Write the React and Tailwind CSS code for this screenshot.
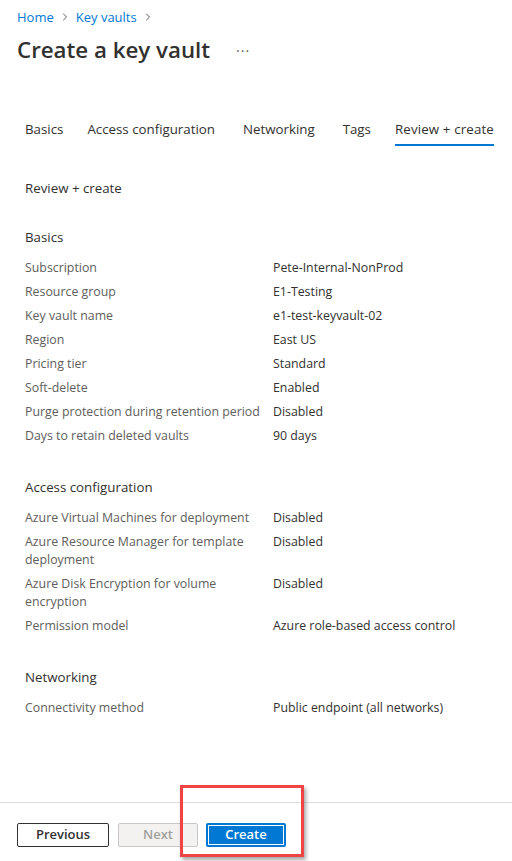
import React from 'react';
import { ChevronRight } from 'lucide-react';

const basics = [
  ['Subscription', 'Pete-Internal-NonProd'],
  ['Resource group', 'E1-Testing'],
  ['Key vault name', 'e1-test-keyvault-02'],
  ['Region', 'East US'],
  ['Pricing tier', 'Standard'],
  ['Soft-delete', 'Enabled'],
  ['Purge protection during retention period', 'Disabled'],
  ['Days to retain deleted vaults', '90 days'],
];

const access = [
  ['Azure Virtual Machines for deployment', 'Disabled'],
  ['Azure Resource Manager for template deployment', 'Disabled'],
  ['Azure Disk Encryption for volume encryption', 'Disabled'],
  ['Permission model', 'Azure role-based access control'],
];

const networking = [['Connectivity method', 'Public endpoint (all networks)']];

const tabs = [
  { label: 'Basics', cls: '' },
  { label: 'Access configuration', cls: 'ml-[24px]' },
  { label: 'Networking', cls: 'ml-[28px]' },
  { label: 'Tags', cls: 'ml-[28px]' },
  { label: 'Review + create', cls: 'ml-[24px] tracking-[0.15px]' },
];

function Section({ title, rows }) {
  return (
    <div>
      <div className="text-[13.3px] leading-[18px] text-[#323130] mb-[10px]">{title}</div>
      {rows.map(([label, value]) => (
        <div key={label} className="grid grid-cols-[248px_1fr] py-[3px] text-[12.35px] leading-[18px]">
          <div className="text-[#605e5c] pr-2">{label}</div>
          <div className="text-[#323130]">{value}</div>
        </div>
      ))}
    </div>
  );
}

export default function App() {
  return (
    <div
      className="relative h-screen flex flex-col bg-white overflow-hidden"
      style={{ fontFamily: '"Open Sans", "Noto Sans", sans-serif' }}
    >
      <div className="flex-1">
        {/* Breadcrumb */}
        <div className="pt-[8px] px-[17px] flex items-center gap-[5px] text-[13px] leading-[18px]">
          <span className="text-[#0078d4]">Home</span>
          <ChevronRight size={12} className="text-[#605e5c]" />
          <span className="text-[#0078d4]">Key vaults</span>
          <ChevronRight size={12} className="text-[#605e5c]" />
        </div>

        {/* Title */}
        <div className="mt-[8px] px-[17px] flex items-center">
          <h1 className="text-[22.3px] leading-[32px] font-semibold text-[#323130]">Create a key vault</h1>
          <span className="ml-[26px] text-[#605e5c] text-[14px] tracking-[1px]">···</span>
        </div>

        {/* Tabs */}
        <div className="mt-[53px] px-[25px] flex">
          {tabs.map((t) => {
            const active = t.label === 'Review + create';
            return (
              <div key={t.label} className={`flex flex-col ${t.cls}`}>
                <span className="text-[13.3px] leading-[20px] text-[#323130] whitespace-nowrap">{t.label}</span>
                <span className={`mt-[5px] h-[2px] ${active ? 'bg-[#0078d4]' : 'bg-transparent'}`}></span>
              </div>
            );
          })}
        </div>

        <div className="px-[25px]">
          <div className="mt-[33px] text-[13.3px] leading-[18px] text-[#323130]">Review + create</div>
          <div className="mt-[31px]">
            <Section title="Basics" rows={basics} />
          </div>
          <div className="mt-[30px]">
            <Section title="Access configuration" rows={access} />
          </div>
          <div className="mt-[30px]">
            <Section title="Networking" rows={networking} />
          </div>
        </div>
      </div>

      {/* Footer */}
      <div className="border-t border-[#e1dfdd] pt-[20px] pb-[14px] px-[17px] flex gap-[8px]">
        <button className="w-[92px] h-[24px] border border-[#323130] rounded-[2px] text-[13px] font-semibold text-[#323130] bg-white">
          Previous
        </button>
        <button className="ml-[1px] w-[80px] h-[24px] border border-[#c8c6c4] rounded-[2px] text-[13px] font-semibold text-[#a19f9d] bg-[#f3f2f1]">
          Next
        </button>
        <button className="w-[80px] h-[24px] rounded-[2px] bg-[#0078d4] p-[2px]">
          <span className="flex items-center justify-center w-full h-full border border-white text-[13px] font-semibold text-white">
            Create
          </span>
        </button>
      </div>

      {/* Annotation highlight */}
      <div className="absolute left-[180px] top-[785px] w-[124px] h-[72px] border-[3px] border-[#f04444] shadow-[2px_3px_4px_rgba(0,0,0,0.35)]"></div>
    </div>
  );
}
